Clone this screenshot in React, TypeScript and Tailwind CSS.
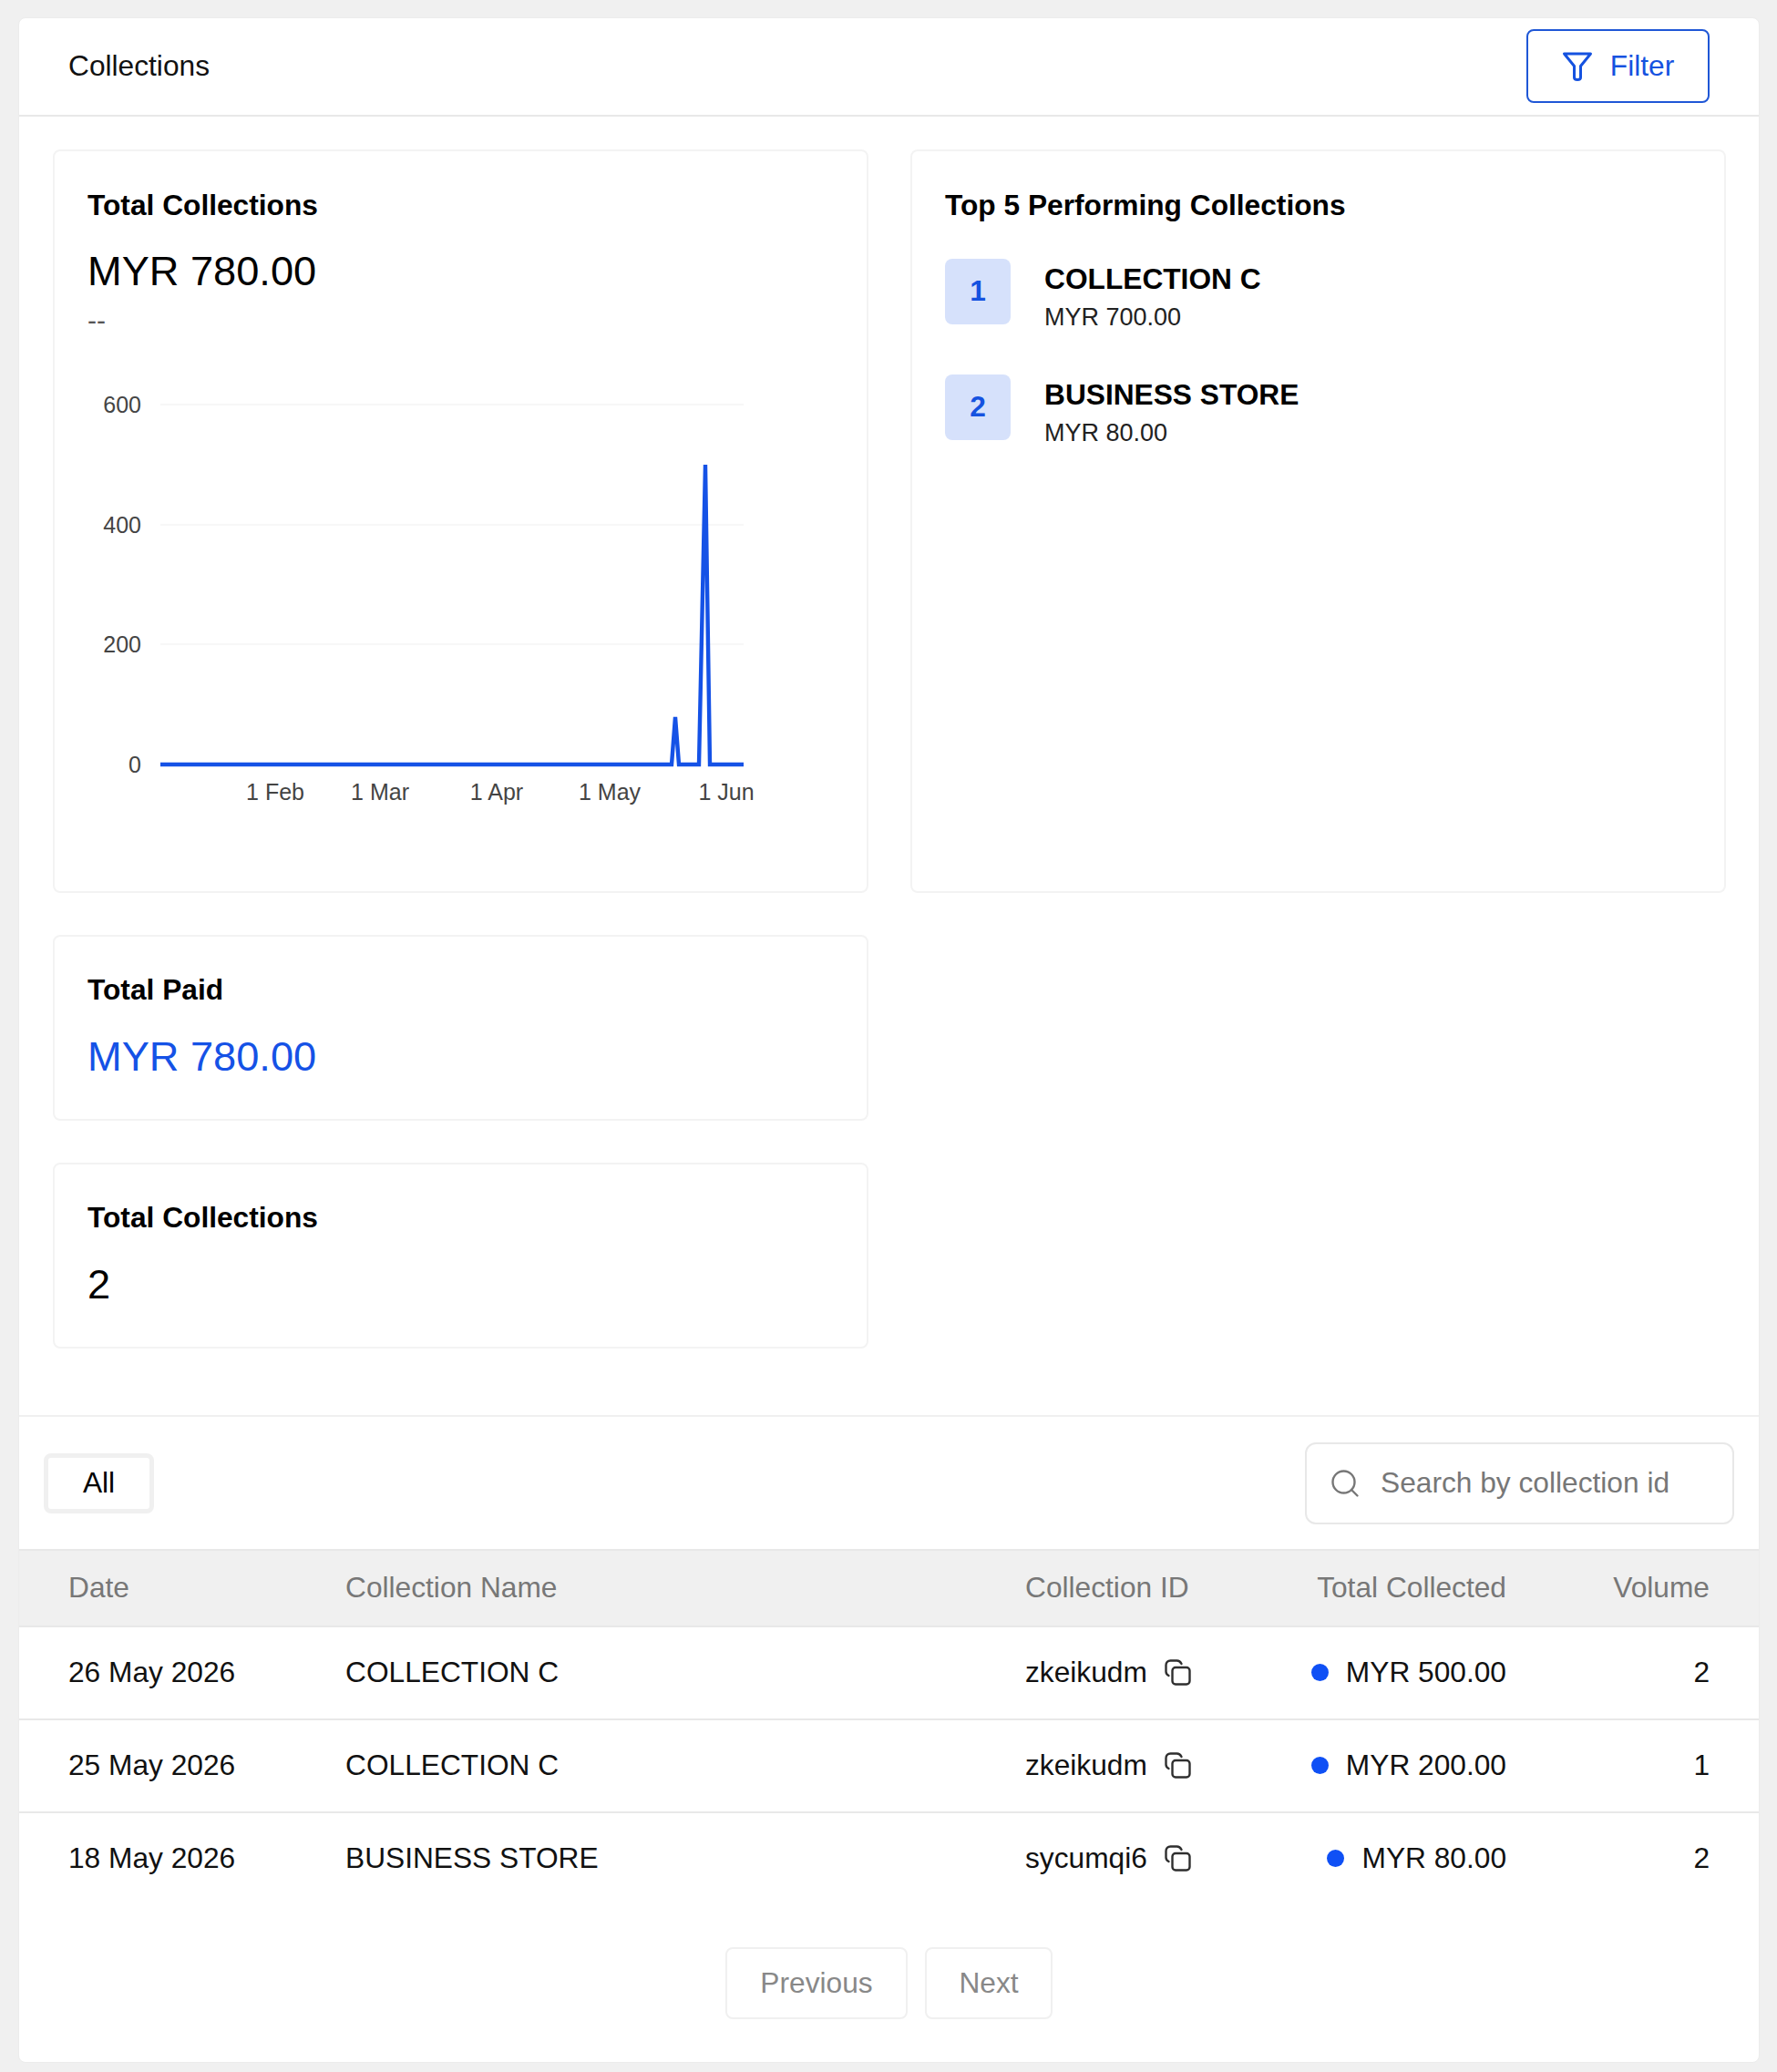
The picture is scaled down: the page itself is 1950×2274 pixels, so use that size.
import { Search } from "lucide-react";

type Row = {
  date: string;
  name: string;
  id: string;
  total: string;
  volume: number;
};

const rows: Row[] = [
  { date: "26 May 2026", name: "COLLECTION C", id: "zkeikudm", total: "MYR 500.00", volume: 2 },
  { date: "25 May 2026", name: "COLLECTION C", id: "zkeikudm", total: "MYR 200.00", volume: 1 },
  { date: "18 May 2026", name: "BUSINESS STORE", id: "sycumqi6", total: "MYR 80.00", volume: 2 },
];

const top = [
  { rank: 1, name: "COLLECTION C", amount: "MYR 700.00" },
  { rank: 2, name: "BUSINESS STORE", amount: "MYR 80.00" },
];

function FilterIcon() {
  return (
    <svg width="34" height="34" viewBox="0 0 34 34" fill="none" stroke="#1552e0" strokeWidth="3" strokeLinejoin="round">
      <path d="M2.5 3H31.5L20.5 16.5V29Q20.5 31.5 17 31.5Q13.5 31.5 13.5 29V16.5Z" />
    </svg>
  );
}

function CopyIcon() {
  return (
    <svg width="29" height="29" viewBox="0 0 29 29" fill="none" stroke="#2f2f2f" strokeWidth="2.4" strokeLinecap="round">
      <rect x="8.5" y="9" width="19" height="18.5" rx="3.5" />
      <path d="M4.5 18C2.5 17 1.5 15.5 1.5 13.5V6.5C1.5 3.5 3.5 1.5 6.5 1.5H13.5C16 1.5 17.5 3 18.5 5" />
    </svg>
  );
}

function Chart() {
  const gridY = [24, 156, 287];
  const yLabels = [
    { label: "600", y: 24 },
    { label: "400", y: 156 },
    { label: "200", y: 287 },
    { label: "0", y: 419 },
  ];
  const xLabels = [
    { label: "1 Feb", x: 206 },
    { label: "1 Mar", x: 321 },
    { label: "1 Apr", x: 449 },
    { label: "1 May", x: 573 },
    { label: "1 Jun", x: 701 },
  ];

  return (
    <svg width="760" height="470" viewBox="0 0 760 470" className="mt-[50px] block">
      {gridY.map((y) => (
        <line key={y} x1="80" x2="720" y1={y} y2={y} stroke="#f7f7f7" strokeWidth="2" />
      ))}
      {yLabels.map((t) => (
        <text key={t.label} x="59" y={t.y + 9} textAnchor="end" fontSize="25" fill="#444444">
          {t.label}
        </text>
      ))}
      {xLabels.map((t) => (
        <text key={t.label} x={t.x} y="458" textAnchor="middle" fontSize="25" fill="#444444">
          {t.label}
        </text>
      ))}
      <polyline
        points="80,419 641,419 645,367 649,419 671,419 678,90 683,419 720,419"
        fill="none"
        stroke="#1552e6"
        strokeWidth="4.4"
        strokeLinejoin="miter"
        strokeMiterlimit="2"
      />
    </svg>
  );
}

export default function App() {
  return (
    <div className="min-h-[2274px] bg-[#f0f0f0] pl-[20px] pr-[19px] pt-[19px] pb-[11px] font-['Liberation_Sans',Arial,sans-serif] text-[31.7px] text-[#111]">
      <div className="rounded-lg border border-[#ececec] bg-white">
        <div className="flex h-[108px] items-center justify-between border-b-2 border-[#e8e8e8] pl-[54px] pr-[54px]">
          <h1 className="font-normal">Collections</h1>
          <button className="mb-[1px] flex h-[81px] w-[201px] items-center justify-center gap-[19px] rounded-lg border-[2.5px] border-[#1f57d6] text-[#1552e0]">
            <FilterIcon />
            Filter
          </button>
        </div>

        <div className="grid grid-cols-[895px_895px] gap-x-[46px] gap-y-[46px] pl-[37px] pr-[36px] pt-[36px] pb-[73px]">
          <div className="h-[816px] rounded-lg border-2 border-[#f3f3f3] px-[36px] pt-[41px]">
            <h2 className="leading-9 font-bold text-black">Total Collections</h2>
            <div className="mt-[30px] text-[45.2px] leading-[50px] text-black">MYR 780.00</div>
            <div className="mt-[11px] text-[30px] leading-9 text-[#555]">--</div>
            <Chart />
          </div>

          <div className="h-[816px] rounded-lg border-2 border-[#f3f3f3] px-[36px] pt-[41px]">
            <h2 className="leading-9 font-bold text-black">Top 5 Performing Collections</h2>
            <div className="mt-[41px] flex flex-col gap-[46px]">
              {top.map((item) => (
                <div key={item.rank} className="flex h-[81px] gap-[37px]">
                  <div className="flex h-[72px] w-[72px] items-center justify-center rounded-lg bg-[#d6e1fb] font-bold text-[#1552e0]">
                    {item.rank}
                  </div>
                  <div className="pt-[4px]">
                    <div className="leading-9 font-bold text-black">{item.name}</div>
                    <div className="mt-[6px] text-[27px] leading-9 text-[#222]">{item.amount}</div>
                  </div>
                </div>
              ))}
            </div>
          </div>

          <div className="rounded-lg border-2 border-[#f3f3f3] px-[36px] pt-[40px] pb-[43px]">
            <h2 className="leading-9 font-bold text-black">Total Paid</h2>
            <div className="mt-[31px] text-[45.2px] leading-[50px] text-[#1552e6]">MYR 780.00</div>
          </div>
          <div />

          <div className="rounded-lg border-2 border-[#f3f3f3] px-[36px] pt-[40px] pb-[43px]">
            <h2 className="leading-9 font-bold text-black">Total Collections</h2>
            <div className="mt-[31px] text-[45.2px] leading-[50px] text-black">2</div>
          </div>
          <div />
        </div>

        <div className="flex h-[147px] items-center justify-between border-t-2 border-[#f0f0f0] pl-[27px] pr-[27px]">
          <button className="h-[66px] w-[121px] rounded-lg border-[5px] border-[#f0f0f0] text-black">All</button>
          <div className="flex h-[90px] w-[471px] items-center gap-[21px] rounded-xl border-2 border-[#e8e8e8] pl-[24px] pr-4">
            <Search size={36} strokeWidth={1.6} color="#777777" className="shrink-0" />
            <input
              placeholder="Search by collection id"
              className="min-w-0 flex-1 bg-transparent outline-none placeholder:text-[#777]"
            />
          </div>
        </div>

        <div className="grid h-[86px] grid-cols-[304px_746px_290px_238px_223px] items-center border-y-2 border-[#e8e8e8] bg-[#f0f0f0] pl-[54px] text-[#777]">
          <div>Date</div>
          <div>Collection Name</div>
          <div>Collection ID</div>
          <div className="text-right">Total Collected</div>
          <div className="text-right">Volume</div>
        </div>

        {rows.map((row, index) => (
          <div
            key={row.date}
            className={
              index < rows.length - 1
                ? "grid h-[102px] grid-cols-[304px_746px_290px_238px_223px] items-center border-b-2 border-[#e8e8e8] pl-[54px]"
                : "grid h-[101px] grid-cols-[304px_746px_290px_238px_223px] items-center pb-[1px] pl-[54px]"
            }
          >
            <div>{row.date}</div>
            <div>{row.name}</div>
            <div className="flex items-center gap-[19px]">
              {row.id}
              <CopyIcon />
            </div>
            <div className="flex items-center justify-end gap-[19px] whitespace-nowrap">
              <span className="h-[19px] w-[19px] rounded-full bg-[#0f50f5]" />
              {row.total}
            </div>
            <div className="text-right">{row.volume}</div>
          </div>
        ))}

        <div className="flex justify-center gap-[19px] pt-[46px] pb-[47px] text-[#888]">
          <button className="h-[79px] w-[200px] rounded-lg border-2 border-[#f0f0f0]">Previous</button>
          <button className="h-[79px] w-[140px] rounded-lg border-2 border-[#f0f0f0]">Next</button>
        </div>
      </div>
    </div>
  );
}
